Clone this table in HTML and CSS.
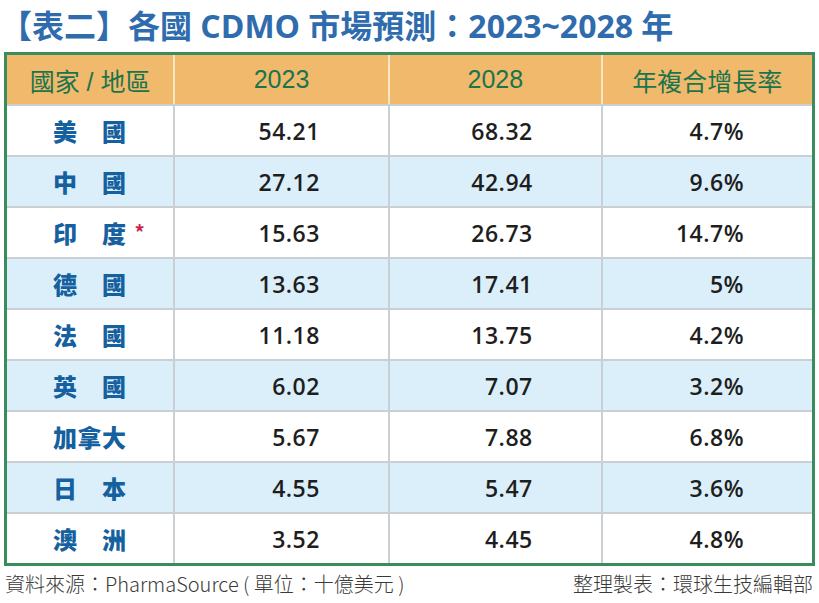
FILE: index.html
```html
<!DOCTYPE html>
<html lang="zh-Hant">
<head>
<meta charset="utf-8">
<title>各國 CDMO 市場預測</title>
<link rel="stylesheet" href="styles.css">
</head>
<body>
<div class="page">
  <h1 class="title">【表二】各國 CDMO 市場預測：2023~2028 年</h1>
  <table class="data">
    <colgroup>
      <col class="c1"><col class="c2"><col class="c3"><col class="c4">
    </colgroup>
    <thead>
      <tr><th>國家 / 地區</th><th>2023</th><th>2028</th><th>年複合增長率</th></tr>
    </thead>
    <tbody>
      <tr><td class="name">美　國</td><td>54.21</td><td>68.32</td><td>4.7%</td></tr>
      <tr><td class="name">中　國</td><td>27.12</td><td>42.94</td><td>9.6%</td></tr>
      <tr><td class="name">印　度<span class="star">*</span></td><td>15.63</td><td>26.73</td><td>14.7%</td></tr>
      <tr><td class="name">德　國</td><td>13.63</td><td>17.41</td><td>5%</td></tr>
      <tr><td class="name">法　國</td><td>11.18</td><td>13.75</td><td>4.2%</td></tr>
      <tr><td class="name">英　國</td><td>6.02</td><td>7.07</td><td>3.2%</td></tr>
      <tr><td class="name">加拿大</td><td>5.67</td><td>7.88</td><td>6.8%</td></tr>
      <tr><td class="name">日　本</td><td>4.55</td><td>5.47</td><td>3.6%</td></tr>
      <tr><td class="name">澳　洲</td><td>3.52</td><td>4.45</td><td>4.8%</td></tr>
    </tbody>
  </table>
  <div class="footer">
    <span>資料來源：PharmaSource ( 單位：十億美元 )</span>
    <span>整理製表：環球生技編輯部</span>
  </div>
</div>
</body>
</html>
```

FILE: styles.css
```css
html, body {
  margin: 0;
  padding: 0;
  background: #ffffff;
}

.page {
  width: 819px;
  height: 603px;
  display: flex;
  flex-direction: column;
  font-family: "Noto Sans CJK TC", sans-serif;
}

.title {
  margin: 0;
  height: 52px;
  padding-left: 0;
  font-family: "Open Sans", "Noto Sans CJK TC", sans-serif;
  font-size: 32px;
  font-weight: 700;
  line-height: 52px;
  color: #2f6cad;
  white-space: nowrap;
  letter-spacing: 0;
}

.data {
  margin-left: 4px;
  width: 811px;
  border-collapse: collapse;
  table-layout: fixed;
  border: 3px solid #3a8c5c;
}

.c1 { width: 168px; }
.c2 { width: 214px; }
.c3 { width: 212px; }
.c4 { width: 211px; }

.data th {
  height: 49px;
  padding: 0;
  background: #f1b96c;
  color: #1b744c;
  font-family: "Liberation Sans", "Noto Sans CJK TC", sans-serif;
  font-size: 25px;
  font-weight: 400;
  text-align: center;
  border-right: 2px solid #fbe6c4;
  border-bottom: 2px solid #c9cfd3;
}

.data th:last-child {
  border-right: none;
}

.data td {
  height: 49px;
  padding: 0 68px 0 0;
  border: 2px solid #c9cfd3;
  text-align: right;
  font-family: "Open Sans", sans-serif;
  font-size: 23px;
  font-weight: 600;
  color: #1e1e1e;
  letter-spacing: 0.5px;
}

.data tbody tr:nth-child(even) td {
  background: #dbeffa;
}

.data td.name {
  padding: 0 0 0 46px;
  text-align: left;
  font-family: "Noto Sans CJK TC", sans-serif;
  font-size: 24px;
  font-weight: 900;
  color: #15609f;
  letter-spacing: 0.5px;
}

.star {
  margin-left: 8px;
  color: #c8244a;
  font-size: 20px;
  font-weight: 700;
  position: relative;
  top: -3px;
}

.footer {
  display: flex;
  justify-content: space-between;
  padding: 3px 6px 0 5px;
  font-size: 20px;
  font-weight: 300;
  line-height: 30px;
  color: #3a3a3a;
  font-family: "Noto Sans CJK TC", sans-serif;
  white-space: nowrap;
}
```
